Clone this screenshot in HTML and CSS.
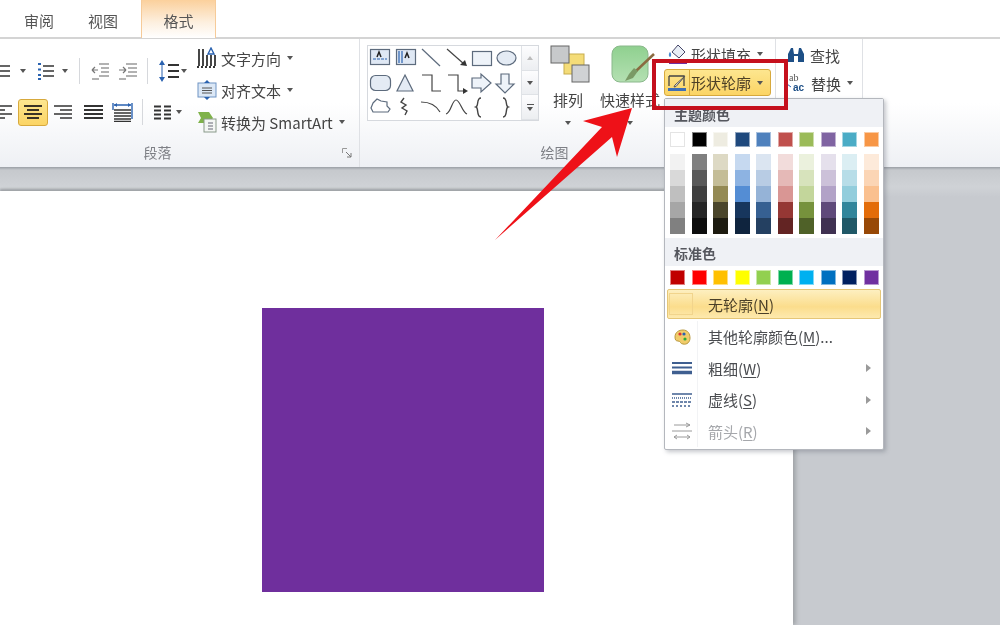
FILE: index.html
```html
<!DOCTYPE html>
<html lang="zh">
<head>
<meta charset="utf-8">
<title>形状轮廓</title>
<link rel="stylesheet" href="styles.css">
</head>
<body>
<div class="page">
  <nav class="tabs">
    <span class="tab">审阅</span>
    <span class="tab">视图</span>
    <span class="tab tab-active">格式</span>
  </nav>

  <section class="ribbon">
    <div class="group group-para">
      <div class="group-body">
        <div class="para-rows">
          <div class="tool-row row-top">
            <svg width="19" height="20" viewBox="0 0 19 20"><path d="M5 5h13M5 10h13M5 15h13" stroke="#333" stroke-width="1.6"/></svg>
            <i class="caret ml9"></i>
            <svg class="ml11" width="17" height="20" viewBox="0 0 17 20"><path d="M6 5h11M6 10h11M6 15h11" stroke="#333" stroke-width="1.6"/><path d="M1 3h3M1 8.500h3M1 14h3M1 18h3" stroke="#2a62b0" stroke-width="2"/></svg>
            <i class="caret ml8"></i>
            <i class="sep ml11"></i>
            <svg class="ml11" width="19" height="20" viewBox="0 0 19 20"><path d="M8 3h10M10 7h8M10 11h8M8 15h10M1 18h7" stroke="#999" stroke-width="1.400"/><path d="M1 9h6M1 9l3-3M1 9l3 3" stroke="#777" fill="none" stroke-width="1.200"/></svg>
            <svg class="ml8" width="20" height="20" viewBox="0 0 20 20"><path d="M8 3h11M10 7h9M10 11h9M8 15h11M1 18h7" stroke="#999" stroke-width="1.400"/><path d="M1 9h7M8 9l-3-3M8 9l-3 3" stroke="#777" fill="none" stroke-width="1.200"/></svg>
            <i class="sep ml9"></i>
            <svg class="ml11" width="20" height="24" viewBox="0 0 20 24"><path d="M9 6h11M9 12h11M9 18h11" stroke="#333" stroke-width="1.800"/><path d="M3 1l3 5H0zM3 23l3-5H0z" fill="#2a62b0"/><path d="M3 6v12" stroke="#2a62b0"/></svg>
            <i class="caret ml2"></i>
          </div>
          <div class="tool-row row-bottom">
            <svg width="21" height="16" viewBox="0 0 21 16"><path d="M0 2h20M0 6h13M0 10h20M0 14h13" stroke="#333" stroke-width="1.600"/></svg>
            <span class="tool-on ml5"><svg width="18" height="16" viewBox="0 0 18 16"><path d="M0 2h18M3 6h12M0 10h18M3 14h12" stroke="#3a3226" stroke-width="1.800"/></svg></span>
            <svg class="ml6" width="18" height="16" viewBox="0 0 18 16"><path d="M0 2h18M6 6h12M0 10h18M6 14h12" stroke="#333" stroke-width="1.600"/></svg>
            <svg class="ml12" width="19" height="16" viewBox="0 0 19 16"><path d="M0 2h19M0 6h19M0 10h19M0 14h19" stroke="#333" stroke-width="1.800"/></svg>
            <svg class="ml9" width="21" height="20" viewBox="0 0 21 20"><path d="M2 8h17M2 11h17M2 14h17M2 17h17M2 19.500h17" stroke="#333" stroke-width="1.300"/><path d="M1 1v7M20 1v16M2 3h17" stroke="#2a62b0" stroke-width="1.400"/><path d="M2 3l3-2v4zM19 3l-3-2v4z" fill="#2a62b0"/></svg>
            <i class="sep ml9"></i>
            <svg class="ml11" width="17" height="15" viewBox="0 0 17 15"><path d="M0 1.500h7M0 5.500h7M0 9.500h7M0 13.500h7M10 1.500h7M10 5.500h7M10 9.500h7M10 13.500h7" stroke="#333" stroke-width="2"/></svg>
            <i class="caret ml5"></i>
          </div>
        </div>
        <div class="text-tools">
          <div class="text-tool">
            <svg width="20" height="22" viewBox="0 0 20 22"><path d="M2 2v17M6 2v17M10 8v11M14 8v11M18 8v11" stroke="#333" stroke-width="1.800"/><path d="M14 1l-3 6h6z" fill="none" stroke="#2a62b0" stroke-width="1.400"/><path d="M0 20h20" stroke="#333" stroke-dasharray="2 2" stroke-width="2"/></svg>
            <span>文字方向</span><i class="caret ml6"></i>
          </div>
          <div class="text-tool">
            <svg width="20" height="20" viewBox="0 0 20 20"><rect x="1" y="3" width="18" height="14" fill="#dce8f6" stroke="#6f94c4"/><path d="M5 8h10M5 10.500h10M5 13h10" stroke="#555"/><path d="M10 0l3 3H7zM10 20l3-3H7z" fill="#2a62b0"/></svg>
            <span>对齐文本</span><i class="caret ml6"></i>
          </div>
          <div class="text-tool">
            <svg width="20" height="22" viewBox="0 0 20 22"><path d="M1 1h11l4 6-4 5H1l3-5z" fill="#7fb24a"/><rect x="7" y="8" width="12" height="13" fill="#f4f6f4" stroke="#8a9a8a"/><path d="M11 12h5M11 15h5M11 18h5" stroke="#667"/></svg>
            <span>转换为 SmartArt</span><i class="caret ml6"></i>
          </div>
        </div>
      </div>
      <div class="group-label">段落<svg class="launcher" width="10" height="10" viewBox="0 0 10 10"><path d="M.5 5V.5H5" stroke="#999" fill="none"/><path d="M4 4l5 5M9 5v4H5" stroke="#777" fill="none"/></svg></div>
    </div>

    <div class="group group-draw">
      <div class="group-body">
        <div class="gallery">
          <svg class="gallery-shapes" width="153" height="74" viewBox="0 0 153 74" fill="none" stroke="#5d6b7d" stroke-width="1.200">
            <rect x="2.500" y="3.500" width="19" height="15" fill="#dfe8f4"/><path d="M5 13h14" stroke="#2a62b0" stroke-dasharray="3 1"/><path d="M9 11l2-5 2 5" stroke="#222" stroke-width="1.500"/>
            <rect x="28.500" y="3.500" width="19" height="15" fill="#dfe8f4"/><path d="M31 5v12M34 5v12" stroke="#2a62b0"/><path d="M37 12l2-5 2 5" stroke="#222" stroke-width="1.500"/>
            <path d="M54 3l18 17"/>
            <path d="M79 3l17 15" stroke="#444"/><path d="M99 20l-7-1 5-5z" fill="#333" stroke="none"/>
            <rect x="104.500" y="5.500" width="19" height="14" fill="#eef3f9"/>
            <ellipse cx="138.500" cy="12" rx="9.500" ry="7" fill="#e4ebf4"/>
            <rect x="2.500" y="29.500" width="20" height="15" rx="5" fill="#e4ebf4"/>
            <path d="M37 29l8 16H29z" fill="#e4ebf4"/>
            <path d="M54 29h10v16h9" stroke="#444"/>
            <path d="M80 29h10v16h7" stroke="#444"/><path d="M100 45l-5-3v6z" fill="#333" stroke="none"/>
            <path d="M104 32h9v-4l10 9-10 9v-4h-9z" fill="#eef3f9"/>
            <path d="M133 28h8v10h5l-9 9-9-9h5z" fill="#eef3f9"/>
            <path d="M5 57l4-4 4 2 6 1v4l3 3-2 3H5l-2-4z"/>
            <path d="M36 52l-3 4 5 3-4 3 5 3-2 4" stroke-width="1.400" stroke="#444"/>
            <path d="M53 56c8 0 15 3 19 10" stroke="#444"/>
            <path d="M78 68c5-1 6-14 10-14s6 12 11 14" stroke="#444"/>
            <path d="M113 52c-5 0-2 8-5 9 3 1 0 10 5 10" stroke="#444" stroke-width="1.400"/>
            <path d="M135 52c5 0 2 8 5 9-3 1 0 10-5 10" stroke="#444" stroke-width="1.400"/>
          </svg>
          <div class="gallery-scroll">
            <span class="scroll-btn"><i class="caret caret-up"></i></span>
            <span class="scroll-btn"><i class="caret"></i></span>
            <span class="scroll-btn"><i class="more"></i><i class="caret"></i></span>
          </div>
        </div>
        <div class="big-btn big-arrange">
          <svg class="arrange-icon" width="40" height="38" viewBox="0 0 40 38"><rect x="14" y="9" width="20" height="20" fill="#f4dc78" stroke="#c8ad4c"/><rect x="1" y="1" width="18" height="17" fill="#c7c9cb" stroke="#666"/><rect x="22" y="20" width="17" height="17" fill="#d0d2d4" stroke="#666"/></svg>
          <span class="big-text">排列</span>
          <i class="caret big-caret"></i>
        </div>
        <div class="big-btn big-style">
          <svg width="46" height="38" viewBox="0 0 46 38"><defs><linearGradient id="greenFill" x1="0" y1="0" x2="0" y2="1"><stop offset="0" stop-color="#8fd08f"/><stop offset="1" stop-color="#b4e0b2"/></linearGradient></defs><rect x="2" y="1" width="36" height="36" rx="8" fill="url(#greenFill)" stroke="#8ab88b"/><path d="M44 9L26 26" stroke="#8a6a40" stroke-width="2.500"/><path d="M28 26l-4-3-5 6-4 7 8-3z" fill="#7a9a66"/></svg>
          <span class="big-text">快速样式</span>
          <i class="caret big-caret"></i>
        </div>
        <div class="shape-tools">
          <div class="fill-tool">
            <svg width="20" height="22" viewBox="0 0 20 22"><path d="M4 9l6-7 7 7-6 6z" fill="#e8eef6" stroke="#446"/><path d="M2 9c-2 2-1 5 0 5s2-3 0-5z" fill="#4a8ad0"/><rect x="1" y="17" width="18" height="4" fill="#7030a0"/></svg>
            <span>形状填充</span><i class="caret ml6"></i>
          </div>
          <div class="outline-tool">
            <span class="outline-icon">
              <svg width="20" height="20" viewBox="0 0 20 20"><path d="M2 3h15v10" fill="none" stroke="#444" stroke-width="1.300"/><path d="M2 3v10" stroke="#444" stroke-width="1.300"/><path d="M18 3L8 12l-1 2 2-.500z" fill="#f7efe2" stroke="#555"/><rect x="1" y="15" width="18" height="3" fill="#3f6fb5"/></svg>
            </span>
            <span class="outline-text">形状轮廓</span><i class="caret ml6"></i>
          </div>
        </div>
      </div>
      <div class="group-label label-draw">绘图</div>
    </div>

    <div class="group group-edit">
      <div class="edit-tools">
        <div class="edit-tool">
          <svg width="18" height="18" viewBox="0 0 18 18"><path d="M1 16V8l3-6h2l1 6h4l1-6h2l3 6v8h-6V10H7v6z" fill="#1d4f86"/></svg>
          <span>查找</span>
        </div>
        <div class="edit-tool">
          <svg class="replace-icon" width="19" height="20" viewBox="0 0 19 20"><text x="2" y="8" class="ab">ab</text><text x="6" y="18" class="ac">ac</text><path d="M0 11l4 3" stroke="#2a62b0"/></svg>
          <span>替换</span><i class="caret ml6"></i>
        </div>
      </div>
    </div>
  </section>

  <main class="workspace">
    <div class="slide">
      <div class="purple-shape"></div>
    </div>
  </main>

  <aside class="menu">
    <div class="menu-head">主题颜色</div>
    <div class="swatches theme-row">
      <i style="background:#ffffff"></i><i style="background:#000000"></i><i style="background:#eeece1"></i><i style="background:#1f497d"></i><i style="background:#4f81bd"></i><i style="background:#c0504d"></i><i style="background:#9bbb59"></i><i style="background:#8064a2"></i><i style="background:#4bacc6"></i><i style="background:#f79646"></i>
    </div>
    <div class="swatches shades">
      <i style="background:#f2f2f2"></i><i style="background:#7f7f7f"></i><i style="background:#ddd9c4"></i><i style="background:#c6d9f0"></i><i style="background:#dbe5f1"></i><i style="background:#f2dcdb"></i><i style="background:#ebf1dd"></i><i style="background:#e5e0ec"></i><i style="background:#dbeef3"></i><i style="background:#fdeada"></i>
      <i style="background:#d9d9d9"></i><i style="background:#595959"></i><i style="background:#c4bd97"></i><i style="background:#8db3e2"></i><i style="background:#b8cce4"></i><i style="background:#e5b9b7"></i><i style="background:#d7e3bc"></i><i style="background:#ccc1d9"></i><i style="background:#b7dde8"></i><i style="background:#fbd5b5"></i>
      <i style="background:#bfbfbf"></i><i style="background:#3f3f3f"></i><i style="background:#948a54"></i><i style="background:#548dd4"></i><i style="background:#95b3d7"></i><i style="background:#d99694"></i><i style="background:#c3d69b"></i><i style="background:#b2a2c7"></i><i style="background:#92cddc"></i><i style="background:#fac08f"></i>
      <i style="background:#a6a6a6"></i><i style="background:#262626"></i><i style="background:#4a452a"></i><i style="background:#17365d"></i><i style="background:#366092"></i><i style="background:#953734"></i><i style="background:#76923c"></i><i style="background:#5f497a"></i><i style="background:#31859b"></i><i style="background:#e36c09"></i>
      <i style="background:#808080"></i><i style="background:#0d0d0d"></i><i style="background:#1d1b10"></i><i style="background:#0f243e"></i><i style="background:#244061"></i><i style="background:#632423"></i><i style="background:#4f6128"></i><i style="background:#3f3151"></i><i style="background:#205867"></i><i style="background:#974806"></i>
    </div>
    <div class="menu-head menu-head-std">标准色</div>
    <div class="swatches std-row">
      <i style="background:#c00000"></i><i style="background:#ff0000"></i><i style="background:#ffc000"></i><i style="background:#ffff00"></i><i style="background:#92d050"></i><i style="background:#00b050"></i><i style="background:#00b0f0"></i><i style="background:#0070c0"></i><i style="background:#002060"></i><i style="background:#7030a0"></i>
    </div>
    <div class="no-outline"><span class="no-outline-icon"></span><span>无轮廓(<u>N</u>)</span></div>
    <ul class="menu-items">
      <li class="menu-item">
        <span class="menu-icon"><svg width="18" height="18" viewBox="0 0 18 18"><path d="M2 9c0-5 4-7 8-7 5 0 7 4 7 8s-3 7-7 6c-3 0-2-3-5-3-2 0-3-1-3-4z" fill="#f1cc6a" stroke="#b99a40"/><circle cx="7" cy="6" r="1.600" fill="#d33"/><circle cx="11" cy="6" r="1.600" fill="#2a62b0"/><circle cx="12" cy="11" r="1.600" fill="#3a3"/></svg></span>
        <span class="menu-label">其他轮廓颜色(<u>M</u>)...</span>
      </li>
      <li class="menu-item">
        <span class="menu-icon"><svg width="20" height="14" viewBox="0 0 20 14"><path d="M0 2h20" stroke="#3f5f90" stroke-width="2"/><path d="M0 6.500h20" stroke="#3f5f90" stroke-width="2"/><path d="M0 11.500h20" stroke="#3f5f90" stroke-width="3.500"/></svg></span>
        <span class="menu-label">粗细(<u>W</u>)</span><i class="submenu"></i>
      </li>
      <li class="menu-item">
        <span class="menu-icon"><svg width="20" height="14" viewBox="0 0 20 14"><path d="M0 1h20" stroke="#3f5f90" stroke-width="1.500"/><path d="M0 5h20" stroke="#3f5f90" stroke-width="1.500" stroke-dasharray="1 1"/><path d="M0 9h20" stroke="#3f5f90" stroke-width="1.500" stroke-dasharray="3 1"/><path d="M0 13h20" stroke="#3f5f90" stroke-width="1.500" stroke-dasharray="2 2"/></svg></span>
        <span class="menu-label">虚线(<u>S</u>)</span><i class="submenu"></i>
      </li>
      <li class="menu-item menu-item-off">
        <span class="menu-icon"><svg width="20" height="18" viewBox="0 0 20 18" fill="none" stroke="#9a9a9a"><path d="M2 3h16M14 1l4 2-4 2M0 9h20M2 15h16M5 13l-3 2 3 2M15 13l3 2-3 2"/></svg></span>
        <span class="menu-label">箭头(<u>R</u>)</span><i class="submenu"></i>
      </li>
    </ul>
  </aside>

  <div class="callout-box"></div>
  <svg class="callout-arrow" width="150" height="140" viewBox="0 0 150 140"><polygon points="142,3 93,16 112,22 5,135 122,32 127,52" fill="#ee1118"/></svg>
</div>
</body>
</html>
```

FILE: styles.css
```css
* { box-sizing: border-box; }
html, body { margin: 0; padding: 0; }
body { background: #fff; font-family: "Noto Sans CJK SC", "Liberation Sans", sans-serif; color: #444; }
i { display: block; font-style: normal; }
u { text-underline-offset: 2px; }

.page { position: relative; width: 1000px; height: 625px; overflow: hidden; display: flex; flex-direction: column; filter: blur(.45px); }

.ml2 { margin-left: 2px; } .ml5 { margin-left: 5px; } .ml6 { margin-left: 6px; } .ml8 { margin-left: 8px; }
.ml9 { margin-left: 9px; } .ml11 { margin-left: 11px; } .ml12 { margin-left: 12px; }

.tabs { height: 39px; flex: none; display: flex; padding-left: 9px; border-bottom: 2px solid #d4d4d4; font-size: 15px; line-height: 20px; color: #555; }
.tab { width: 60px; padding-top: 11px; text-align: center; }
.tab:nth-child(2) { margin-left: 4px; }
.tab-active { width: 75px; margin-left: 8px; height: 38px; background: linear-gradient(#fbd09c, #fdf0e0 60%, #fff); border: solid #f6cb99; border-width: 0 1px; }

.ribbon { height: 128px; flex: none; display: flex; background: linear-gradient(#fff 50%, #eef0f4); }
.group { flex: none; display: flex; flex-direction: column; border-right: 1px solid #dfe1e5; }
.group-body { height: 100px; display: flex; flex: none; }
.group-label { position: relative; height: 28px; text-align: center; font-size: 14px; line-height: 27px; color: #7d7f85; }
.label-draw { padding-right: 26px; }
.launcher { position: absolute; right: 7px; top: 9px; }

.group-para { width: 404px; margin-left: -44px; }
.para-rows { width: 241px; padding-left: 36px; flex: none; }
.tool-row { display: flex; align-items: center; }
.row-top { height: 26px; margin-top: 19px; }
.row-bottom { height: 28px; margin-top: 14px; }
.caret { width: 0; height: 0; flex: none; border: 3.5px solid transparent; border-top: 4px solid #555; border-bottom: 0; }
.caret-up { border-top: 0; border-bottom: 4px solid #bbb; }
.sep { width: 1px; height: 26px; flex: none; background: #d6d8dc; }
.tool-on { width: 30px; height: 27px; flex: none; display: flex; align-items: center; justify-content: center; background: linear-gradient(#fde68f, #fbd465); border: 1px solid #d7a93d; border-radius: 3px; }

.text-tools { padding-top: 3px; flex: none; }
.text-tool { height: 32px; display: flex; align-items: center; font-size: 15px; white-space: nowrap; }
.text-tool svg { margin-right: 4px; flex: none; }

.group-draw { width: 416px; }
.gallery { width: 172px; height: 76px; margin: 6px 0 0 7px; display: flex; flex: none; background: #fff; border: 1px solid #d6d9de; }
.gallery-shapes { flex: none; }
.gallery-scroll { width: 17px; flex: none; display: flex; flex-direction: column; border-left: 1px solid #dfe2e6; }
.scroll-btn { flex: 1; display: flex; flex-direction: column; align-items: center; justify-content: center; gap: 2px; background: linear-gradient(#fdfdfe, #eceef1); border-bottom: 1px solid #dfe2e6; }
.more { width: 7px; height: 1px; background: #555; }

.big-btn { width: 46px; margin-left: 6px; margin-top: 6px; flex: none; display: flex; flex-direction: column; align-items: center; }
.big-style { width: 66px; }
.big-style svg { margin-left: 6px; }
.arrange-icon { margin-left: 4px; }
.big-text { margin-top: 6px; font-size: 15px; line-height: 22px; white-space: nowrap; }
.big-caret { margin-top: 10px; }

.shape-tools { margin-left: 1px; width: 107px; flex: none; }
.fill-tool { height: 30px; padding-left: 4px; display: flex; align-items: center; font-size: 15px; white-space: nowrap; }
.fill-tool svg { margin-right: 3px; flex: none; }
.outline-tool { height: 27px; display: flex; align-items: center; font-size: 15px; white-space: nowrap; background: linear-gradient(#fde68f, #fbd465); border: 1px solid #d7a93d; border-radius: 3px; color: #4d4026; }
.outline-icon { width: 25px; height: 100%; display: flex; align-items: center; justify-content: center; border-right: 1px solid #d7a93d; }
.outline-text { margin-left: 1px; }

.group-edit { width: 87px; }
.edit-tools { padding: 2px 0 0 11px; }
.edit-tool { height: 28px; display: flex; align-items: center; font-size: 15px; white-space: nowrap; }
.edit-tool svg { margin-right: 5px; flex: none; }
.ab { font: 10px "Liberation Serif", serif; fill: #555; }
.ac { font: bold 10px "Liberation Sans", sans-serif; fill: #1d4f86; }

.workspace { flex: 1; padding-top: 24px; background: linear-gradient(#9a9fa5, #c6c9cd 3px, #cfd2d6 20px, #c7cacf 30px); }
.slide { width: 793px; height: 100%; background: #fff; box-shadow: 3px 0 4px #a3a6aa, 0 -2px 2px #9fa3a8; padding: 117px 0 0 262px; }
.purple-shape { width: 282px; height: 284px; background: #6f2f9d; }

.menu { position: absolute; left: 664px; top: 98px; width: 220px; height: 352px; background: #fff; border: 1px solid #b4b7bd; border-radius: 2px; box-shadow: 2px 2px 4px rgba(90,95,110,.35); }
.menu-head { height: 28px; padding-left: 9px; font-size: 14px; font-weight: 700; line-height: 30px; color: #55575e; background: #eff1f5; }
.menu-head-std { margin-top: 4px; height: 28px; }
.swatches { display: grid; grid-template-columns: repeat(10, 15px); column-gap: 6.500px; padding-left: 5px; }
.swatches i { border: 1px solid rgba(255,255,255,.5); }
.theme-row { margin-top: 5px; }
.theme-row i, .std-row i { height: 15px; }
.theme-row i:first-child { border-color: #e4e4e4; }
.shades { margin-top: 7px; }
.shades i { height: 16px; border-width: 0; }
.std-row { margin-top: 4px; }
.no-outline { height: 30px; margin: 4px 2px 0; display: flex; align-items: center; font-size: 15px; color: #4a3f28; background: linear-gradient(#fdefc0, #fbdd8c 60%, #fde9ae); border: 1px solid #e5c677; border-radius: 2px; }
.no-outline-icon { width: 24px; height: 22px; margin: 0 15px 0 1px; border: 1px solid #f1d48c; }
.menu-items { list-style: none; margin: 2px 0 0; padding: 0; background: linear-gradient(#f2f3f5, #f2f3f5) 32px 0 / 1px 100% no-repeat; }
.menu-item { height: 31.500px; display: flex; align-items: center; font-size: 15px; color: #4a4c50; }
.menu-icon { width: 32px; display: flex; justify-content: center; flex: none; padding-left: 1px; }
.menu-label { margin-left: 11px; flex: 1; }
.submenu { width: 0; height: 0; margin-right: 12px; border: 4px solid transparent; border-left: 5px solid #9a9a9a; border-right: 0; }
.menu-item-off { color: #a5a7ab; }

.callout-box { position: absolute; left: 652px; top: 59px; width: 136px; height: 51px; border: 4px solid #c5101d; }
.callout-arrow { position: absolute; left: 490px; top: 105px; }
```
